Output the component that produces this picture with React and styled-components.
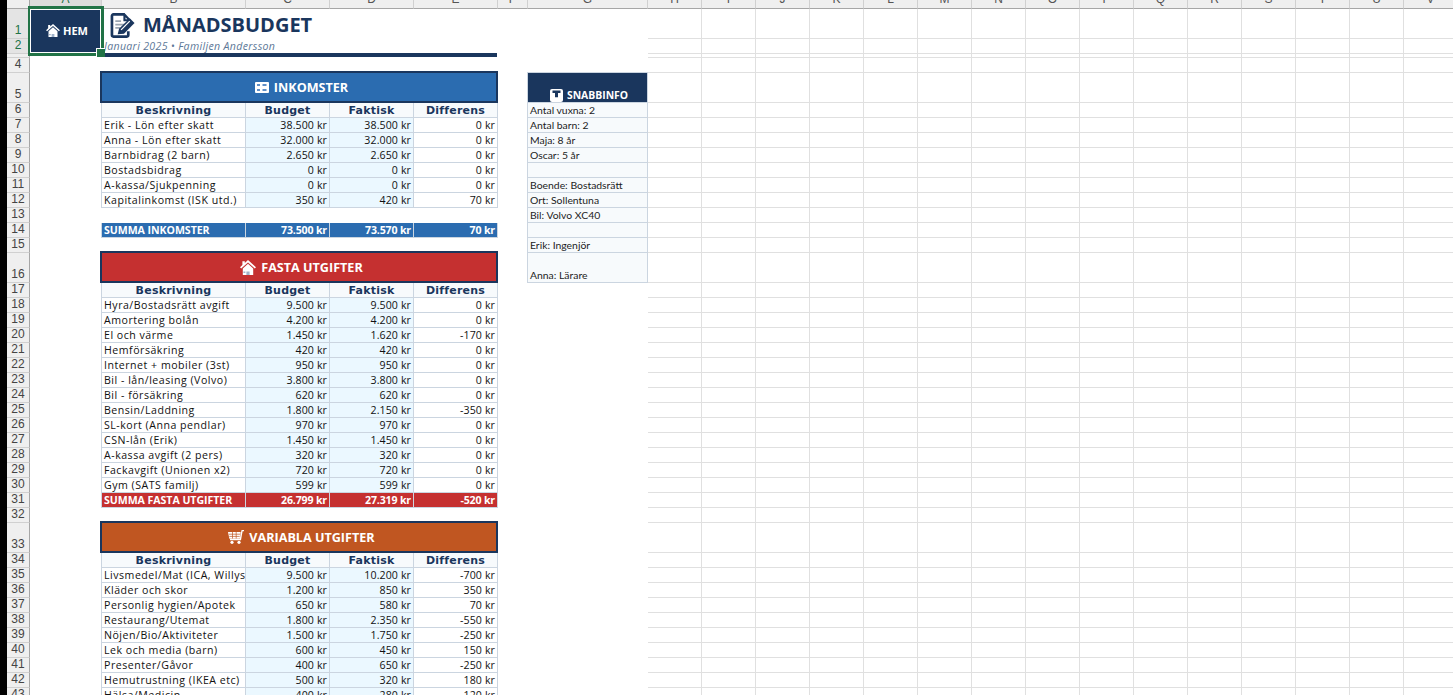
import React from 'react';
import styled, { createGlobalStyle, css } from 'styled-components';

const NAVY = '#1a365d';
const LINE = '#cbd5e0';
const GRID = '#e0e0e0';
const GREEN = '#217346';

const Global = createGlobalStyle`
  html, body { margin: 0; padding: 0; height: 695px; overflow: hidden; background: #fff; }
  #root { height: 695px; }
`;

const Frame = styled.div`
  display: flex;
  height: 695px;
  width: 1453px;
  overflow: hidden;
  background: #fff;
`;
const WindowEdge = styled.div`
  flex: 0 0 7px;
  background: #000;
`;
const Sheet = styled.div`
  display: grid;
  flex: none;
  grid-template-columns: 23px 72px 144px 84px 84px 84px 30px 120px repeat(15, 54px);
  grid-template-rows: 9px 30px 15px 4px 15px 30px repeat(10, 15px) 30px repeat(16, 15px) 30px repeat(10, 15px);
  font-family: "Open Sans", "Liberation Sans", sans-serif;
  color: #111;
`;
const at = css`
  grid-column: ${p => p.$col} / span ${p => p.$span || 1};
  grid-row: ${p => p.$row + 1} / span ${p => p.$rows || 1};
  min-width: 0;
  min-height: 0;
`;
const Corner = styled.div`
  ${at}
  background: #efefef;
  border-right: 1px solid #a6a6a6;
  border-bottom: 1px solid #a6a6a6;
  box-sizing: border-box;
`;
const ColHead = styled.div`
  ${at}
  box-sizing: border-box;
  display: flex;
  justify-content: center;
  align-items: flex-end;
  overflow: hidden;
  background: ${p => (p.$active ? '#dcdcdc' : '#efefef')};
  border-right: 1px solid #d0d0d0;
  border-bottom: 1px solid ${p => (p.$active ? GREEN : '#a6a6a6')};
  color: ${p => (p.$active ? GREEN : '#555')};
  font: 12px/17px "Liberation Sans", sans-serif;
`;
const RowHead = styled.div`
  ${at}
  box-sizing: border-box;
  display: flex;
  justify-content: center;
  align-items: flex-end;
  overflow: hidden;
  background: ${p => (p.$active ? '#e4e4e4' : '#efefef')};
  border-right: 1px solid ${p => (p.$active ? GREEN : '#a6a6a6')};
  border-bottom: 1px solid #d0d0d0;
  color: ${p => (p.$active ? GREEN : '#444')};
  font: 12px/15px "Liberation Sans", sans-serif;
`;
const Blank = styled.div`
  ${at}
  box-sizing: border-box;
  border-right: 1px solid ${GRID};
  border-bottom: 1px solid ${GRID};
`;
const HomeCell = styled.div`
  ${at}
  position: relative;
  display: flex;
  align-items: center;
  justify-content: center;
  gap: 3px;
  background: ${NAVY};
  color: #fff;
  font-size: 11px;
  font-weight: 700;
  padding: 0 0 2px 2px;
  box-sizing: border-box;
`;
const Selection = styled.div`
  position: absolute;
  left: -2px;
  right: -2px;
  top: -3px;
  bottom: -2px;
  border: 3px solid ${GREEN};
  border-left-width: 2px;
  box-shadow: inset 0 0 0 1px #fff;
  z-index: 3;
`;
const Handle = styled.div`
  position: absolute;
  right: -3px;
  bottom: -3px;
  width: 8px;
  height: 8px;
  background: ${GREEN};
  border-left: 1px solid #fff;
  border-top: 1px solid #fff;
  z-index: 4;
`;
const TitleCell = styled.div`
  ${at}
  display: flex;
  align-items: center;
  gap: 7px;
  padding: 2px 0 0 8px;
  color: ${NAVY};
  font-size: 20px;
  font-weight: 700;
  line-height: 28px;
`;
const Subtitle = styled.div`
  ${at}
  padding: 0 0 0 2px;
  color: #5d7897;
  font-size: 10.6px;
  font-style: italic;
  line-height: 15px;
  white-space: nowrap;
  letter-spacing: 0.03em;
`;
const Rule = styled.div`
  ${at}
  height: 4px;
  margin: -1px 1px 0 -1px;
  background: ${NAVY};
`;
const SectionBar = styled.div`
  ${at}
  position: relative;
  display: flex;
  align-items: center;
  justify-content: center;
  gap: 5px;
  padding: 0 0 2px 3px;
  background: ${p => p.$bg};
  color: #fff;
  font-size: 12.6px;
  font-weight: 700;
  box-sizing: border-box;
  &::after {
    content: '';
    position: absolute;
    left: -2px;
    top: -2px;
    right: 0;
    bottom: 0;
    border: 2px solid ${NAVY};
  }
`;
const baseCell = css`
  ${at}
  box-sizing: border-box;
  border-right: 1px solid ${LINE};
  border-bottom: 1px solid ${LINE};
  overflow: hidden;
  white-space: nowrap;
  font-size: 10.6px;
  line-height: 14px;
  letter-spacing: 0.048em;
`;
const HeadCell = styled.div`
  ${baseCell}
  text-align: center;
  background: #f7fafc;
  color: ${NAVY};
  font-family: "DejaVu Sans", sans-serif;
  font-weight: 700;
  font-size: 11px;
  line-height: 15px;
  letter-spacing: 0.02em;
  ${p => p.$first && `box-shadow: -1px 0 0 ${LINE};`}
`;
const DescCell = styled.div`
  ${baseCell}
  padding-left: 2px;
  background: #fff;
  box-shadow: -1px 0 0 ${LINE};
`;
const AmountCell = styled.div`
  ${baseCell}
  padding-right: 2px;
  text-align: right;
  letter-spacing: 0.01em;
  background: ${p => (p.$tint ? '#ebf8ff' : '#fff')};
`;
const SumLabel = styled.div`
  ${baseCell}
  padding-left: 2px;
  background: ${p => p.$bg};
  box-shadow: -1px 0 0 ${LINE};
  color: #fff;
  font-weight: 700;
  letter-spacing: -0.005em;
`;
const SumAmount = styled.div`
  ${baseCell}
  padding-right: 2px;
  text-align: right;
  background: ${p => p.$bg};
  color: #fff;
  font-weight: 700;
  letter-spacing: -0.015em;
`;
const InfoHead = styled.div`
  ${baseCell}
  display: flex;
  align-items: flex-end;
  justify-content: center;
  gap: 4px;
  padding-left: 3px;
  background: ${NAVY};
  box-shadow: -1px 0 0 ${LINE}, 0 -1px 0 ${LINE}, -1px -1px 0 ${LINE};
  color: #fff;
  font-size: 10.4px;
  font-weight: 700;
  letter-spacing: 0;
`;
const InfoCell = styled.div`
  ${baseCell}
  display: flex;
  align-items: flex-end;
  padding-left: 2px;
  background: #f7fafc;
  box-shadow: -1px 0 0 ${LINE};
  color: #1c1c1c;
  font-family: "Lato", sans-serif;
  font-weight: 400;
  font-size: 10.4px;
  letter-spacing: 0;
`;

const HomeIcon = ({ size = 14 }) => (
  <svg width={size} height={size - 1} viewBox="0 0 16 15" fill="#fff">
    <path d="M8 0 16 7.2 14.8 8.5 8 2.4 1.2 8.5 0 7.2 2.4 5V1.2h2.4v1.7z" />
    <path d="M2.8 8.4 8 3.8 13.2 8.4V15H2.8z" />
    <path d="M6.4 15v-3.6h3.2V15zM3.4 11.6h2V13h-2z" fill="#9fb2c9" />
  </svg>
);
const AbacusIcon = () => (
  <svg width="14" height="11" viewBox="0 0 14 11">
    <rect width="14" height="11" rx="1" fill="#fff" />
    <path d="M2 2h3v2H2zM7.5 2h4v2h-4zM2 7h3v2H2zM7.5 7h4v2h-4z" fill="#5f8fc7" />
  </svg>
);
const CartIcon = () => (
  <svg width="16" height="14" viewBox="0 0 16 14" fill="#fff">
    <path d="M0 2h12.6l-.8 6.8H1.4z" />
    <path d="M13 2.2 13.6 0H16v1.2h-1.4L13 10.2H2V9h9.8z" />
    <circle cx="4" cy="12.3" r="1.6" />
    <circle cx="11" cy="12.3" r="1.6" />
    <path d="M1 4.2h11M1.3 6.4h10.4M4.5 2v6.5M8.2 2v6.5" stroke="#c05621" strokeWidth=".7" />
  </svg>
);
const InfoIcon = () => (
  <svg width="13" height="13" viewBox="0 0 13 13">
    <rect width="13" height="13" rx="2" fill="#fff" />
    <path d="M2.5 1.5h8v2.4H8V8.2H5V3.9H2.5z" fill={NAVY} />
  </svg>
);
const MemoIcon = () => (
  <svg width="26" height="25" viewBox="0 0 26 26" fill="none">
    <path d="M15 1.5H3a1.5 1.5 0 0 0-1.5 1.5v20A1.5 1.5 0 0 0 3 24.5h14a1.5 1.5 0 0 0 1.5-1.5v-4" stroke={NAVY} strokeWidth="2.8" />
    <path d="M14.5 1.5v6h5.5M14.5 1.5l5.5 6V10" stroke={NAVY} strokeWidth="2.2" />
    <path d="M5 8.5h6M5 12h9M5 15.5h5" stroke="#9aa5b1" strokeWidth="1.8" />
    <path d="M7.5 22l1.4-5.6L20 5.5l5 5L14 21.5z" fill={NAVY} />
    <path d="M11 17.5l9-9" stroke="#fff" strokeWidth="1.3" />
  </svg>
);

const letters = ['A','B','C','D','E','F','G','H','I','J','K','L','M','N','O','P','Q','R','S','T','U','V'];
const ROWS = 43;
const HIDDEN = 3;
const kr = n => `${n < 0 ? '-' : ''}${Math.abs(n).toLocaleString('de-DE')} kr`;

const sections = [
  {
    row: 5, title: 'INKOMSTER', bg: '#2b6cb0', icon: <AbacusIcon />,
    items: [
      ['Erik - Lön efter skatt', 38500, 38500],
      ['Anna - Lön efter skatt', 32000, 32000],
      ['Barnbidrag (2 barn)', 2650, 2650],
      ['Bostadsbidrag', 0, 0],
      ['A-kassa/Sjukpenning', 0, 0],
      ['Kapitalinkomst (ISK utd.)', 350, 420],
    ],
    sumRow: 14, sumLabel: 'SUMMA INKOMSTER', sum: [73500, 73570, 70],
  },
  {
    row: 16, title: 'FASTA UTGIFTER', bg: '#c53030', icon: <HomeIcon size={16} />,
    items: [
      ['Hyra/Bostadsrätt avgift', 9500, 9500],
      ['Amortering bolån', 4200, 4200],
      ['El och värme', 1450, 1620],
      ['Hemförsäkring', 420, 420],
      ['Internet + mobiler (3st)', 950, 950],
      ['Bil - lån/leasing (Volvo)', 3800, 3800],
      ['Bil - försäkring', 620, 620],
      ['Bensin/Laddning', 1800, 2150],
      ['SL-kort (Anna pendlar)', 970, 970],
      ['CSN-lån (Erik)', 1450, 1450],
      ['A-kassa avgift (2 pers)', 320, 320],
      ['Fackavgift (Unionen x2)', 720, 720],
      ['Gym (SATS familj)', 599, 599],
    ],
    sumRow: 31, sumLabel: 'SUMMA FASTA UTGIFTER', sum: [26799, 27319, -520],
  },
  {
    row: 33, title: 'VARIABLA UTGIFTER', bg: '#c05621', icon: <CartIcon />,
    items: [
      ['Livsmedel/Mat (ICA, Willys)', 9500, 10200],
      ['Kläder och skor', 1200, 850],
      ['Personlig hygien/Apotek', 650, 580],
      ['Restaurang/Utemat', 1800, 2350],
      ['Nöjen/Bio/Aktiviteter', 1500, 1750],
      ['Lek och media (barn)', 600, 450],
      ['Presenter/Gåvor', 400, 650],
      ['Hemutrustning (IKEA etc)', 500, 320],
      ['Hälsa/Medicin', 400, 280],
    ],
  },
];
const income = new Set([5]);
const diffOf = (s, b, f) => (income.has(s.row) ? f - b : b - f);
const info = [
  'Antal vuxna: 2', 'Antal barn: 2', 'Maja: 8 år', 'Oscar: 5 år', '',
  'Boende: Bostadsrätt', 'Ort: Sollentuna', 'Bil: Volvo XC40', '',
  'Erik: Ingenjör', 'Anna: Lärare',
];
const columnHeads = ['Beskrivning', 'Budget', 'Faktisk', 'Differens'];

function Section({ s }) {
  return (
    <>
      <SectionBar $col={3} $span={4} $row={s.row} $bg={s.bg}>{s.icon}{s.title}</SectionBar>
      {columnHeads.map((h, i) => (
        <HeadCell key={h} $col={3 + i} $row={s.row + 1} $first={i === 0}>{h}</HeadCell>
      ))}
      {s.items.map(([name, b, f], i) => {
        const r = s.row + 2 + i;
        return (
          <React.Fragment key={name}>
            <DescCell $col={3} $row={r}>{name}</DescCell>
            <AmountCell $col={4} $row={r} $tint>{kr(b)}</AmountCell>
            <AmountCell $col={5} $row={r} $tint>{kr(f)}</AmountCell>
            <AmountCell $col={6} $row={r}>{kr(diffOf(s, b, f))}</AmountCell>
          </React.Fragment>
        );
      })}
      {s.sumRow && (
        <>
          <SumLabel $col={3} $row={s.sumRow} $bg={s.bg}>{s.sumLabel}</SumLabel>
          {s.sum.map((v, i) => (
            <SumAmount key={i} $col={4 + i} $row={s.sumRow} $bg={s.bg}>{kr(v)}</SumAmount>
          ))}
        </>
      )}
    </>
  );
}

export default function App() {
  const rows = Array.from({ length: ROWS }, (_, i) => i + 1);
  return (
    <Frame>
      <Global />
      <WindowEdge />
      <Sheet>
        <Corner $col={1} $row={0} />
        {letters.map((l, i) => (
          <ColHead key={l} $col={i + 2} $row={0} $active={l === 'A'}>{l}</ColHead>
        ))}
        {rows.map(r => (
          <RowHead key={r} $col={1} $row={r} $active={r <= 2}>{r === HIDDEN ? '' : r}</RowHead>
        ))}
        {rows.flatMap(r =>
          letters.slice(7).map((l, i) => <Blank key={l + r} $col={i + 9} $row={r} />)
        )}

        <HomeCell $col={2} $row={1} $rows={2}>
          <HomeIcon />HEM
          <Selection />
          <Handle />
        </HomeCell>
        <TitleCell $col={3} $span={4} $row={1}><MemoIcon />MÅNADSBUDGET</TitleCell>
        <Subtitle $col={3} $span={4} $row={2}>Januari 2025 • Familjen Andersson</Subtitle>
        <Rule $col={3} $span={4} $row={3} />

        {sections.map(s => <Section key={s.row} s={s} />)}

        <InfoHead $col={8} $row={5}><InfoIcon />SNABBINFO</InfoHead>
        {info.map((t, i) => (
          <InfoCell key={i} $col={8} $row={6 + i}>{t}</InfoCell>
        ))}
      </Sheet>
    </Frame>
  );
}
